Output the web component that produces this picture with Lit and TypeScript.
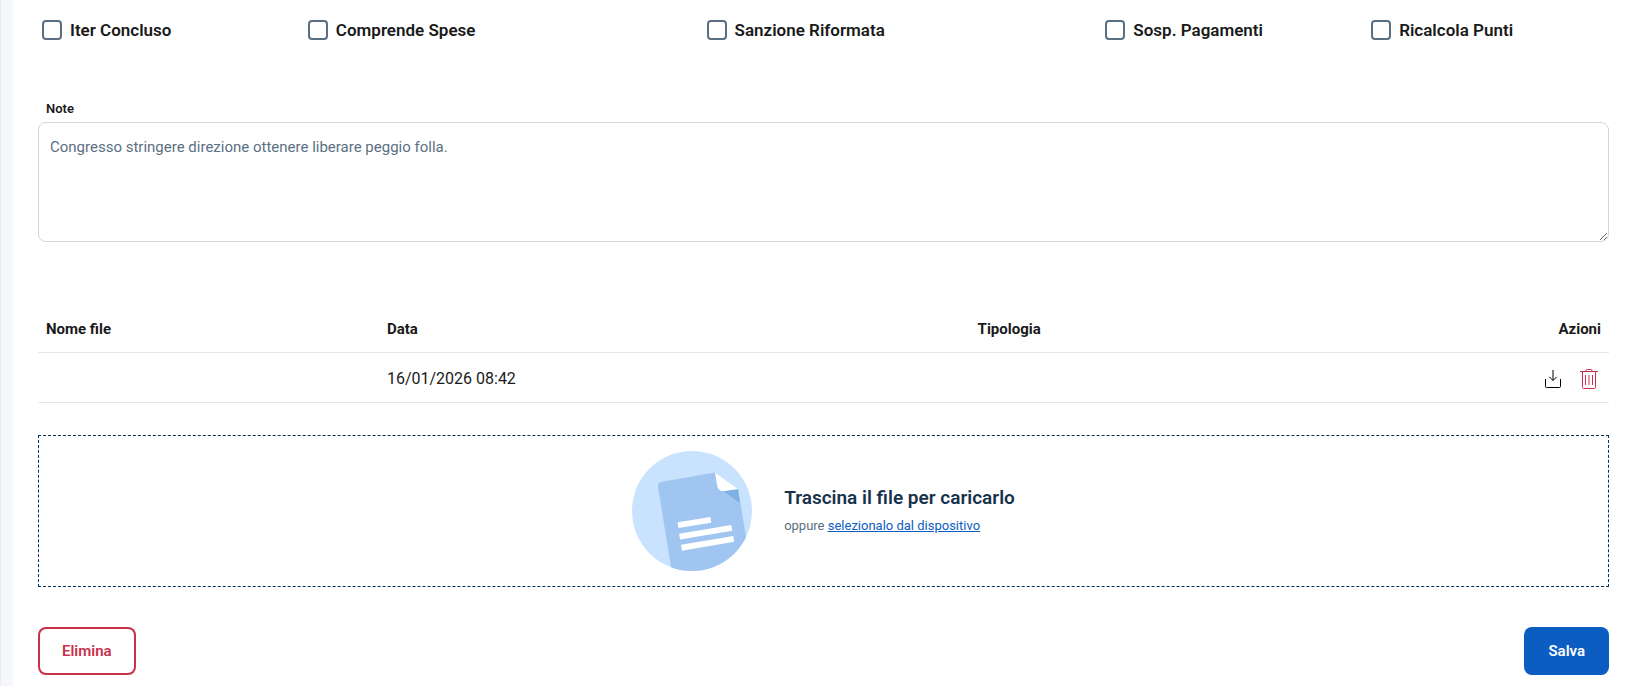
import { LitElement, html, css } from "lit";
import { customElement } from "lit/decorators.js";

interface Flag {
  id: string;
  label: string;
}

const FLAGS: Flag[] = [
  { id: "iter-concluso", label: "Iter Concluso" },
  { id: "comprende-spese", label: "Comprende Spese" },
  { id: "sanzione-riformata", label: "Sanzione Riformata" },
  { id: "sosp-pagamenti", label: "Sosp. Pagamenti" },
  { id: "ricalcola-punti", label: "Ricalcola Punti" },
];

const ATTACHMENTS = [{ name: "", date: "16/01/2026 08:42", type: "" }];

@customElement("app-root")
export class AppRoot extends LitElement {
  static styles = css`
    :host {
      display: block;
      box-sizing: border-box;
      min-height: 100vh;
      padding-left: 12px;
      border-left: 1px solid #e9ebef;
      background: #f6f7fa;
      font-family: Roboto, "Liberation Sans", sans-serif;
      font-size: 15px;
      line-height: 24px;
      color: #1a1a1a;
    }
    *,
    *::before,
    *::after {
      box-sizing: border-box;
    }
    .panel {
      min-height: 100vh;
      padding: 18px 23px 11px 25px;
      background: #fff;
    }
    .flags {
      display: grid;
      grid-template-columns: 2fr 3fr 3fr 2fr 2fr;
      margin: 0 -12px 57px;
    }
    .flag {
      display: flex;
      align-items: center;
      gap: 8px;
      padding: 0 16px;
      font-size: 17px;
      font-weight: 600;
    }
    .flag input {
      appearance: none;
      flex: none;
      width: 20px;
      height: 20px;
      margin: 0;
      border: 2px solid #5b6f82;
      border-radius: 4px;
      background: #fff;
    }
    .flag input:checked {
      background: #0b5dc2;
      border-color: #0b5dc2;
    }
    .note-label {
      display: block;
      padding: 0 8px;
      margin-bottom: 3px;
      font-size: 13px;
      line-height: 20px;
      font-weight: 600;
    }
    .note-field {
      display: block;
      width: 100%;
      height: 120px;
      padding: 12px 11px;
      border: 1px solid #d4d5d7;
      border-radius: 8px;
      background: #fff;
      font: inherit;
      color: #5b6f82;
      resize: vertical;
    }
    .files {
      width: 100%;
      margin: 64px 0 32px;
      border-spacing: 0;
      table-layout: fixed;
    }
    .files th,
    .files td {
      border-bottom: 1px solid #e6e6e8;
      text-align: left;
      vertical-align: middle;
    }
    .files th {
      height: 47px;
      padding: 0 8px;
      font-weight: 700;
    }
    .files td {
      height: 50px;
      padding: 3px 8px 0;
      font-size: 16px;
    }
    .col-name {
      width: 21.7%;
    }
    .col-date {
      width: 37.6%;
    }
    .files .actions-head {
      text-align: right;
    }
    .actions {
      display: flex;
      justify-content: flex-end;
      gap: 12px;
    }
    .icon-button {
      display: block;
      width: 24px;
      height: 24px;
      padding: 0;
      border: 0;
      background: none;
      color: #000;
      cursor: pointer;
    }
    .icon-button.danger {
      color: #c9304c;
    }
    .icon-button svg {
      display: block;
      width: 24px;
      height: 24px;
    }
    .dropzone {
      display: flex;
      align-items: center;
      justify-content: center;
      gap: 32px;
      padding: 15px;
      border: 1px dashed #003060;
    }
    .illustration {
      display: block;
      width: 120px;
      height: 120px;
    }
    .drop-title {
      margin: 0 0 2px;
      font-size: 19px;
      line-height: 28px;
      font-weight: 600;
      color: #17324d;
    }
    .drop-hint {
      margin: 0;
      font-size: 13px;
      color: #5b6f82;
    }
    .drop-hint a {
      color: #0b5dc2;
      text-decoration: underline;
    }
    .footer {
      display: flex;
      justify-content: space-between;
      margin-top: 40px;
    }
    .button {
      padding: 12px 24px;
      border: 0;
      border-radius: 8px;
      font: inherit;
      font-weight: 600;
      cursor: pointer;
    }
    .button.primary {
      background: #0b5dc2;
      color: #fff;
    }
    .button.outline {
      background: #fff;
      color: #c9304c;
      box-shadow: inset 0 0 0 2px #c9304c;
    }
  `;

  render() {
    return html`
      <main class="panel">
        <div class="flags">
          ${FLAGS.map(
            (f) => html`<label class="flag" for=${f.id}>
              <input type="checkbox" id=${f.id} />${f.label}
            </label>`
          )}
        </div>

        <label class="note-label" for="note">Note</label>
        <textarea
          class="note-field"
          id="note"
          .value=${"Congresso stringere direzione ottenere liberare peggio folla."}
        ></textarea>

        <table class="files">
          <thead>
            <tr>
              <th class="col-name" scope="col">Nome file</th>
              <th class="col-date" scope="col">Data</th>
              <th scope="col">Tipologia</th>
              <th class="actions-head" scope="col">Azioni</th>
            </tr>
          </thead>
          <tbody>
            ${ATTACHMENTS.map(
              (a) => html`<tr>
                <td>${a.name}</td>
                <td>${a.date}</td>
                <td>${a.type}</td>
                <td>
                  <div class="actions">
                    <button class="icon-button" type="button" aria-label="Scarica">
                      <svg viewBox="0 0 24 24" fill="none" stroke="currentColor" aria-hidden="true">
                        <path d="M12 3v10.5M8.3 9.8 12 13.5l3.7-3.7" />
                        <path d="M4.5 12v7.500a1 1 0 0 0 1 1h13a1 1 0 0 0 1-1v-7.500" />
                      </svg>
                    </button>
                    <button class="icon-button danger" type="button" aria-label="Elimina file">
                      <svg viewBox="0 0 24 24" fill="none" stroke="currentColor" aria-hidden="true">
                        <path d="M3 4.5h18M9 4.5v-.7A1.3 1.3 0 0 1 10.3 2.5h3.4A1.3 1.3 0 0 1 15 3.8v.7" />
                        <path d="M5.5 4.5v16a1 1 0 0 0 1 1h11a1 1 0 0 0 1-1v-16" />
                        <path d="M8.5 8v10M12 8v10M15.5 8v10" />
                      </svg>
                    </button>
                  </div>
                </td>
              </tr>`
            )}
          </tbody>
        </table>

        <section class="dropzone" aria-label="Caricamento file">
          <svg class="illustration" viewBox="0 0 120 120" aria-hidden="true">
            <defs>
              <clipPath id="disc"><circle cx="60" cy="60" r="60" /></clipPath>
            </defs>
            <circle cx="60" cy="60" r="60" fill="#c9e3ff" />
            <g clip-path="url(#disc)">
              <path
                d="M30 30.8 83 21.5 106 38 116 98V122H40L26 36Q25.5 31.6 30 30.8Z"
                fill="#9fc5f0"
              />
              <path d="M91 40 106 38 108 52Z" fill="#7fb0e3" />
              <path d="M83 21.5 106 38 93 40Q86 41 85 34Z" fill="#fff" />
              <path
                d="M45.6 71.2 78.5 66 79.3 71.7 46.5 77ZM47 82.7 99.3 74 100.3 79.7 48 88.6ZM49 93.8 101.3 85 102.2 90.8 50 99.7Z"
                fill="#fff"
              />
            </g>
          </svg>
          <div>
            <h2 class="drop-title">Trascina il file per caricarlo</h2>
            <p class="drop-hint">
              oppure <a href="#">selezionalo dal dispositivo</a>
            </p>
          </div>
        </section>

        <div class="footer">
          <button class="button outline" type="button">Elimina</button>
          <button class="button primary" type="button">Salva</button>
        </div>
      </main>
    `;
  }
}
